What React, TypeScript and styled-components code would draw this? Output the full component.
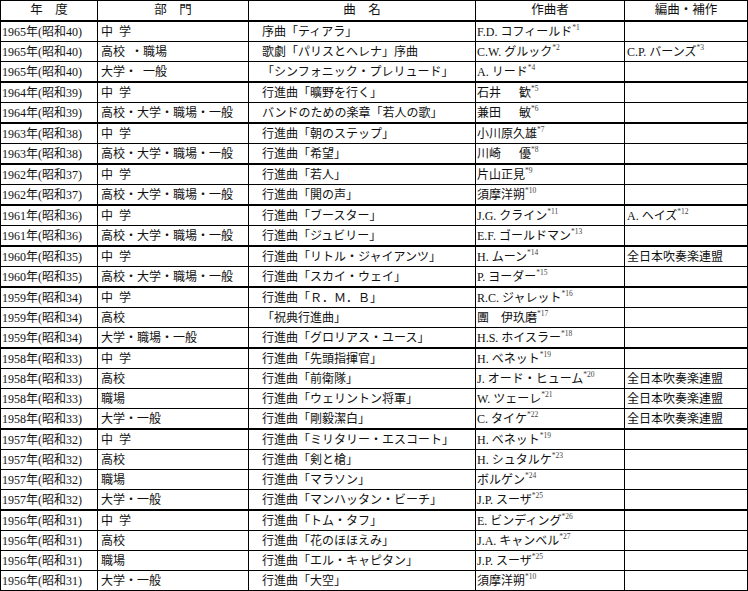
import styled, { createGlobalStyle } from 'styled-components';

type Entry = {
	division: string;
	title: string;
	composer: string;
	note?: string;
	arranger?: string;
	arrNote?: string;
};

type Group = {
	year: string;
	era: string;
	rows: Entry[];
};

const SP = '\u3000\u2002';

const groups: Group[] = [
	{
		year: '1965',
		era: '40',
		rows: [
			{ division: '中\u2002学', title: '序曲「ティアラ」', composer: 'F.D. コフィールド', note: '*1' },
			{ division: '高校\u2002・職場', title: '歌劇「パリスとヘレナ」序曲', composer: 'C.W. グルック', note: '*2', arranger: 'C.P. バーンズ', arrNote: '*3' },
			{ division: '大学・\u2002一般', title: '「シンフォニック・プレリュード」', composer: 'A. リード', note: '*4' },
		],
	},
	{
		year: '1964',
		era: '39',
		rows: [
			{ division: '中\u2002学', title: '行進曲「曠野を行く」', composer: '石井' + SP + '歓', note: '*5' },
			{ division: '高校・大学・職場・一般', title: 'バンドのための楽章「若人の歌」', composer: '兼田' + SP + '敏', note: '*6' },
		],
	},
	{
		year: '1963',
		era: '38',
		rows: [
			{ division: '中\u2002学', title: '行進曲「朝のステップ」', composer: '小川原久雄', note: '*7' },
			{ division: '高校・大学・職場・一般', title: '行進曲「希望」', composer: '川崎' + SP + '優', note: '*8' },
		],
	},
	{
		year: '1962',
		era: '37',
		rows: [
			{ division: '中\u2002学', title: '行進曲「若人」', composer: '片山正見', note: '*9' },
			{ division: '高校・大学・職場・一般', title: '行進曲「閧の声」', composer: '須摩洋朔', note: '*10' },
		],
	},
	{
		year: '1961',
		era: '36',
		rows: [
			{ division: '中\u2002学', title: '行進曲「ブースター」', composer: 'J.G. クライン', note: '*11', arranger: 'A. ヘイズ', arrNote: '*12' },
			{ division: '高校・大学・職場・一般', title: '行進曲「ジュビリー」', composer: 'E.F. ゴールドマン', note: '*13' },
		],
	},
	{
		year: '1960',
		era: '35',
		rows: [
			{ division: '中\u2002学', title: '行進曲「リトル・ジャイアンツ」', composer: 'H. ムーン', note: '*14', arranger: '全日本吹奏楽連盟' },
			{ division: '高校・大学・職場・一般', title: '行進曲「スカイ・ウェイ」', composer: 'P. ヨーダー', note: '*15' },
		],
	},
	{
		year: '1959',
		era: '34',
		rows: [
			{ division: '中\u2002学', title: '行進曲「Ｒ．Ｍ．Ｂ」', composer: 'R.C. ジャレット', note: '*16' },
			{ division: '高校', title: '「祝典行進曲」', composer: '團\u3000伊玖磨', note: '*17' },
			{ division: '大学・職場・一般', title: '行進曲「グロリアス・ユース」', composer: 'H.S. ホイスラー', note: '*18' },
		],
	},
	{
		year: '1958',
		era: '33',
		rows: [
			{ division: '中\u2002学', title: '行進曲「先頭指揮官」', composer: 'H. ベネット', note: '*19' },
			{ division: '高校', title: '行進曲「前衛隊」', composer: 'J. オード・ヒューム', note: '*20', arranger: '全日本吹奏楽連盟' },
			{ division: '職場', title: '行進曲「ウェリントン将軍」', composer: 'W. ツェーレ', note: '*21', arranger: '全日本吹奏楽連盟' },
			{ division: '大学・一般', title: '行進曲「剛毅潔白」', composer: 'C. タイケ', note: '*22', arranger: '全日本吹奏楽連盟' },
		],
	},
	{
		year: '1957',
		era: '32',
		rows: [
			{ division: '中\u2002学', title: '行進曲「ミリタリー・エスコート」', composer: 'H. ベネット', note: '*19' },
			{ division: '高校', title: '行進曲「剣と槍」', composer: 'H. シュタルケ', note: '*23' },
			{ division: '職場', title: '行進曲「マラソン」', composer: 'ボルゲン', note: '*24' },
			{ division: '大学・一般', title: '行進曲「マンハッタン・ビーチ」', composer: 'J.P. スーザ', note: '*25' },
		],
	},
	{
		year: '1956',
		era: '31',
		rows: [
			{ division: '中\u2002学', title: '行進曲「トム・タフ」', composer: 'E. ビンディング', note: '*26' },
			{ division: '高校', title: '行進曲「花のほほえみ」', composer: 'J.A. キャンベル', note: '*27' },
			{ division: '職場', title: '行進曲「エル・キャピタン」', composer: 'J.P. スーザ', note: '*25' },
			{ division: '大学・一般', title: '行進曲「大空」', composer: '須摩洋朔', note: '*10' },
		],
	},
];

export default function App() {
	return (
		<>
			<GlobalStyle />
			<Table>
				<Row $thick>
					<HeadCell>年　度</HeadCell>
					<HeadCell $line>部　門</HeadCell>
					<HeadCell $line>曲　名</HeadCell>
					<HeadCell $line>作曲者</HeadCell>
					<HeadCell $line>編曲・補作</HeadCell>
				</Row>
				{groups.map((g) =>
					g.rows.map((r, i) => (
						<Row key={g.year + i} $thick={i === g.rows.length - 1}>
							<Cell $pad={1}>
								{g.year}年(昭和{g.era})
							</Cell>
							<Cell $line $pad={3}>
								{r.division}
							</Cell>
							<Cell $line $pad={13}>
								{r.title}
							</Cell>
							<Cell $line $pad={1}>
								{r.composer}
								{r.note && <Note>{r.note}</Note>}
							</Cell>
							<Cell $line $pad={2}>
								{r.arranger}
								{r.arrNote && <Note>{r.arrNote}</Note>}
							</Cell>
						</Row>
					))
				)}
			</Table>
		</>
	);
}

const GlobalStyle = createGlobalStyle`
	body {
		margin: 0;
		background: #fff;
		font-family: 'Liberation Serif', 'Noto Sans CJK JP', serif;
		color: #111;
	}
`;

const Table = styled.div`
	width: 748px;
	box-sizing: border-box;
	border: 1px solid #000;
	border-bottom: none;
`;

const Row = styled.div<{ $thick?: boolean }>`
	display: grid;
	grid-template-columns: 96px 151px 227px 149px 1fr;
	box-sizing: border-box;
	height: ${(p) => (p.$thick ? 21 : 20)}px;
	border-bottom: ${(p) => (p.$thick ? 2 : 1)}px solid #000;
`;

const Cell = styled.div<{ $line?: boolean; $pad: number }>`
	display: flex;
	align-items: center;
	box-sizing: border-box;
	padding-left: ${(p) => p.$pad}px;
	border-left: ${(p) => (p.$line ? '1px solid #000' : 'none')};
	font-size: 12px;
	line-height: 1;
	white-space: pre;
	overflow: hidden;
`;

const HeadCell = styled(Cell).attrs({ $pad: 0 })`
	justify-content: center;
	font-size: 12.5px;
`;

const Note = styled.sup`
	align-self: flex-start;
	margin-top: 2px;
	font-size: 7.5px;
	line-height: 1;
	color: #444;
	vertical-align: top;
`;
